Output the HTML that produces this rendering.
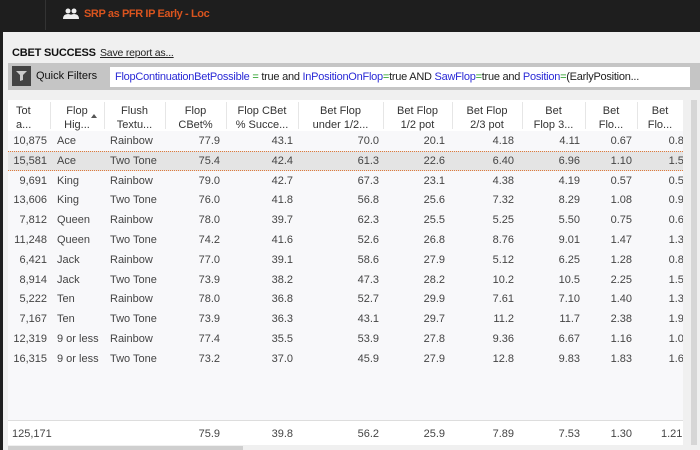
<!DOCTYPE html>
<html><head><meta charset="utf-8">
<style>
*{margin:0;padding:0;box-sizing:border-box}
body{width:700px;height:450px;overflow:hidden;background:#1f1f1f;font-family:"Liberation Sans",sans-serif;font-size:11px;color:#333;position:relative}
.a{position:absolute;white-space:nowrap}
.top{position:absolute;left:0;top:0;width:700px;height:32px;background:#1e1e1e}
.panel{position:absolute;left:3px;top:32px;width:697px;height:418px;background:#f0f0f0}
.fbar{position:absolute;left:8px;top:63px;width:692px;height:27px;background:#c5c5c5}
.inp{position:absolute;left:110px;top:67px;width:580px;height:20px;background:#fff;font-size:11px;letter-spacing:-0.25px;line-height:20px;padding-left:5px;color:#222;white-space:nowrap;overflow:hidden}
.b{color:#2a2ad6}.g{color:#1a9a1a}
.table{position:absolute;left:8px;top:100px;width:675px;height:345px;background:#f8f8fa;overflow:hidden}
.hdr{position:absolute;left:0;top:0;width:675px;height:31px;background:#fff}
.hc{position:absolute;top:4px;text-align:center;line-height:14px;font-size:11px;color:#333}
.sep{position:absolute;top:2px;width:1px;height:27px;background:#e6e6e6}
.r{position:absolute;font-size:11px;color:#444;white-space:nowrap}
.foot{position:absolute;left:0;top:320px;width:675px;height:25px;background:#fff;border-top:1px solid #ddd}
</style></head><body>
<div class="top"></div>
<div class="a" style="left:45px;top:0;width:1px;height:30px;background:#333"></div>
<svg class="a" style="left:63px;top:8px" width="16" height="12" viewBox="0 0 16 12"><circle cx="5" cy="3" r="2.5" fill="#eee"/><circle cx="11" cy="3" r="2.5" fill="#eee"/><path d="M0 11 Q0 6 5 6 Q10 6 10 11Z M6 11 Q6 6 11 6 Q16 6 16 11Z" fill="#eee"/></svg>
<div class="a" style="left:84px;top:8px;color:#d9541e;font-size:11px;letter-spacing:-0.4px;font-weight:bold">SRP as PFR IP Early - Loc</div>
<div class="panel"></div>
<div class="a" style="left:12px;top:47px;font-weight:bold;font-size:11px;letter-spacing:-0.2px;color:#111">CBET SUCCESS</div>
<div class="a" style="left:100px;top:47px;font-size:10.5px;letter-spacing:-0.2px;color:#222;text-decoration:underline">Save report as...</div>
<div class="fbar"></div>
<div class="a" style="left:12px;top:66px;width:19px;height:20px;background:#444"></div>
<svg class="a" style="left:16px;top:71px" width="11" height="10" viewBox="0 0 11 10"><path d="M0 0H11L7 4V9L4 10V4Z" fill="#ccc"/></svg>
<div class="a" style="left:36px;top:70px;font-size:11px;color:#111">Quick Filters</div>
<div class="inp"><span class="b">FlopContinuationBetPossible</span> <span class="g">=</span> true and <span class="b">InPositionOnFlop</span><span class="g">=</span>true AND <span class="b">SawFlop</span><span class="g">=</span>true and <span class="b">Position</span><span class="g">=</span>(EarlyPosition...</div>
<div class="table">
<div class="hdr">
<div class="hc" style="left:0;width:42px;text-align:left;padding-left:8px">Tot<br>a...</div>
<div class="sep" style="left:42px"></div>
<div class="hc" style="left:42px;width:54px">Flop<br>Hig...</div>
<div class="a" style="left:83px;top:14px;width:0;height:0;border-left:3px solid transparent;border-right:3px solid transparent;border-bottom:4px solid #555"></div>
<div class="sep" style="left:96px"></div>
<div class="hc" style="left:96px;width:61px">Flush<br>Textu...</div>
<div class="sep" style="left:157px"></div>
<div class="hc" style="left:157px;width:61px">Flop<br>CBet%</div>
<div class="sep" style="left:218px"></div>
<div class="hc" style="left:218px;width:72px">Flop CBet<br>% Succe...</div>
<div class="sep" style="left:290px"></div>
<div class="hc" style="left:290px;width:85px">Bet Flop<br>under 1/2...</div>
<div class="sep" style="left:375px"></div>
<div class="hc" style="left:375px;width:69px">Bet Flop<br>1/2 pot</div>
<div class="sep" style="left:444px"></div>
<div class="hc" style="left:444px;width:70px">Bet Flop<br>2/3 pot</div>
<div class="sep" style="left:514px"></div>
<div class="hc" style="left:514px;width:63px">Bet<br>Flop 3...</div>
<div class="sep" style="left:577px"></div>
<div class="hc" style="left:577px;width:52px">Bet<br>Flo...</div>
<div class="sep" style="left:629px"></div>
<div class="hc" style="left:629px;width:46px">Bet<br>Flo...</div>
</div>
<div class="a" style="left:0;top:51px;width:675px;height:20px;background:#e4e4e4;border-top:1px dotted #e07a3a;border-bottom:1px dotted #e07a3a"></div>
<div id="rows"></div>
<div class="foot"></div>
<div class="r" style="left:4px;top:328px">125,171</div>
<div class="r" style="right:463px;top:328px">75.9</div>
<div class="r" style="right:390px;top:328px">39.8</div>
<div class="r" style="right:304px;top:328px">56.2</div>
<div class="r" style="right:238px;top:328px">25.9</div>
<div class="r" style="right:169px;top:328px">7.89</div>
<div class="r" style="right:103px;top:328px">7.53</div>
<div class="r" style="right:51px;top:328px">1.30</div>
<div class="r" style="left:653px;top:328px">1.21</div>
</div>
<div class="a" style="left:691px;top:100px;width:6px;height:345px;background:#d6d6d6"></div>
<div class="a" style="left:8px;top:446px;width:235px;height:4px;background:#cfcfcf"></div>
<script>
var d=[["10,875","Ace","Rainbow","77.9","43.1","70.0","20.1","4.18","4.11","0.67","0.89"],
["15,581","Ace","Two Tone","75.4","42.4","61.3","22.6","6.40","6.96","1.10","1.57"],
["9,691","King","Rainbow","79.0","42.7","67.3","23.1","4.38","4.19","0.57","0.50"],
["13,606","King","Two Tone","76.0","41.8","56.8","25.6","7.32","8.29","1.08","0.94"],
["7,812","Queen","Rainbow","78.0","39.7","62.3","25.5","5.25","5.50","0.75","0.64"],
["11,248","Queen","Two Tone","74.2","41.6","52.6","26.8","8.76","9.01","1.47","1.33"],
["6,421","Jack","Rainbow","77.0","39.1","58.6","27.9","5.12","6.25","1.28","0.89"],
["8,914","Jack","Two Tone","73.9","38.2","47.3","28.2","10.2","10.5","2.25","1.53"],
["5,222","Ten","Rainbow","78.0","36.8","52.7","29.9","7.61","7.10","1.40","1.35"],
["7,167","Ten","Two Tone","73.9","36.3","43.1","29.7","11.2","11.7","2.38","1.93"],
["12,319","9 or less","Rainbow","77.4","35.5","53.9","27.8","9.36","6.67","1.16","1.09"],
["16,315","9 or less","Two Tone","73.2","37.0","45.9","27.9","12.8","9.83","1.83","1.68"]];
var rr=[636,0,0,463,390,304,238,169,103,51,-7];
var h="";
d.forEach(function(r,i){var t=35+i*19.8;
h+='<div class="r" style="right:636px;top:'+t+'px">'+r[0]+'</div>';
h+='<div class="r" style="left:49px;top:'+t+'px">'+r[1]+'</div>';
h+='<div class="r" style="left:102px;top:'+t+'px">'+r[2]+'</div>';
for(var k=3;k<11;k++)h+='<div class="r" style="right:'+rr[k]+'px;top:'+t+'px">'+r[k]+'</div>';
});
document.getElementById("rows").innerHTML=h;
</script>
</body></html>
